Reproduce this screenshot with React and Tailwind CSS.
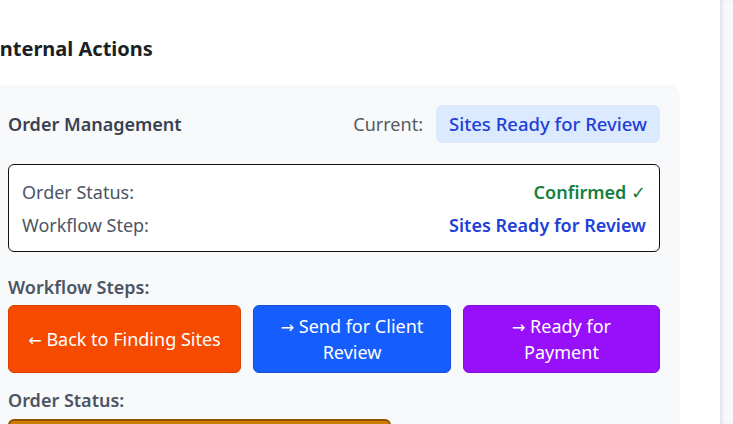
export default function App() {
  return (
    <div className="flex h-screen w-[733px] overflow-hidden bg-white font-['Noto_Sans',sans-serif]">
      {/* Main scroll area, scrolled a little to the right */}
      <div className="w-[720px] flex-none overflow-hidden">
        <div className="-ml-[12px] w-[692px] pt-[35px]">
          <h2 className="ml-[4px] text-[20px] leading-[28px] font-bold text-[#1b1f24]">
            Internal Actions
          </h2>

          <div className="mt-[22px] rounded-[10px] bg-[#f8f9fb] px-[20px] pt-[20px] pb-[20px]">
            {/* Header row */}
            <div className="flex items-center justify-between">
              <h3 className="text-[18px] leading-[24px] font-semibold text-[#374151]">
                Order Management
              </h3>
              <div className="flex items-center gap-[13px]">
                <span className="text-[18px] text-[#555b63]">Current:</span>
                <span className="rounded-[6px] bg-[#dbeafe] px-[13px] py-[7px] text-[18.5px] leading-[24px] font-medium text-[#1e40d8]">
                  Sites Ready for Review
                </span>
              </div>
            </div>

            {/* Status box */}
            <div className="mt-[21px] flex flex-col gap-[7px] rounded-[6px] border border-[#111] bg-white px-[13px] pt-[14px] pb-[13px] text-[18px] leading-[26px]">
              <div className="flex justify-between">
                <span className="text-[#4b5563]">Order Status:</span>
                <span className="font-semibold text-[#15803d]">
                  Confirmed <span className="font-light">✓</span>
                </span>
              </div>
              <div className="flex justify-between">
                <span className="text-[#4b5563]">Workflow Step:</span>
                <span className="font-semibold text-[#1e40d8]">Sites Ready for Review</span>
              </div>
            </div>

            {/* Workflow steps */}
            <p className="mt-[23px] text-[18px] leading-[24px] font-semibold text-[#4b5563]">
              Workflow Steps:
            </p>
            <div className="mt-[6px] flex gap-[12px] text-[18px] leading-[26px] text-white">
              <button className="flex h-[68px] w-[233px] items-center justify-center rounded-[6px] border border-[#d84000] bg-[#f54a00] px-[10px] text-center">
                <span>
                  <span className="font-['DejaVu_Sans',sans-serif] text-[16px] leading-none">←</span> Back to Finding Sites
                </span>
              </button>
              <button className="flex h-[68px] w-[198px] items-center justify-center rounded-[6px] border border-[#1450d8] bg-[#155dfc] px-[20px] text-center">
                <span>
                  <span className="font-['DejaVu_Sans',sans-serif] text-[16px] leading-none">→</span> Send for Client Review
                </span>
              </button>
              <button className="flex h-[68px] w-[197px] items-center justify-center rounded-[6px] border border-[#8210d8] bg-[#9810fa] px-[30px] text-center">
                <span>
                  <span className="font-['DejaVu_Sans',sans-serif] text-[16px] leading-none">→</span> Ready for Payment
                </span>
              </button>
            </div>

            <p className="mt-[15px] text-[18px] leading-[24px] font-semibold text-[#4b5563]">
              Order Status:
            </p>
            <div className="mt-[7px] h-[40px] w-[383px] rounded-[6px] border-2 border-[#954f00] bg-[#c98000]" />
          </div>
        </div>
      </div>

      {/* Side strip */}
      <div className="flex-1 border-l border-[#e4e5ec] bg-[#f7f8fb] shadow-[inset_2px_0_3px_rgba(0,0,0,0.06)]" />
    </div>
  )
}
